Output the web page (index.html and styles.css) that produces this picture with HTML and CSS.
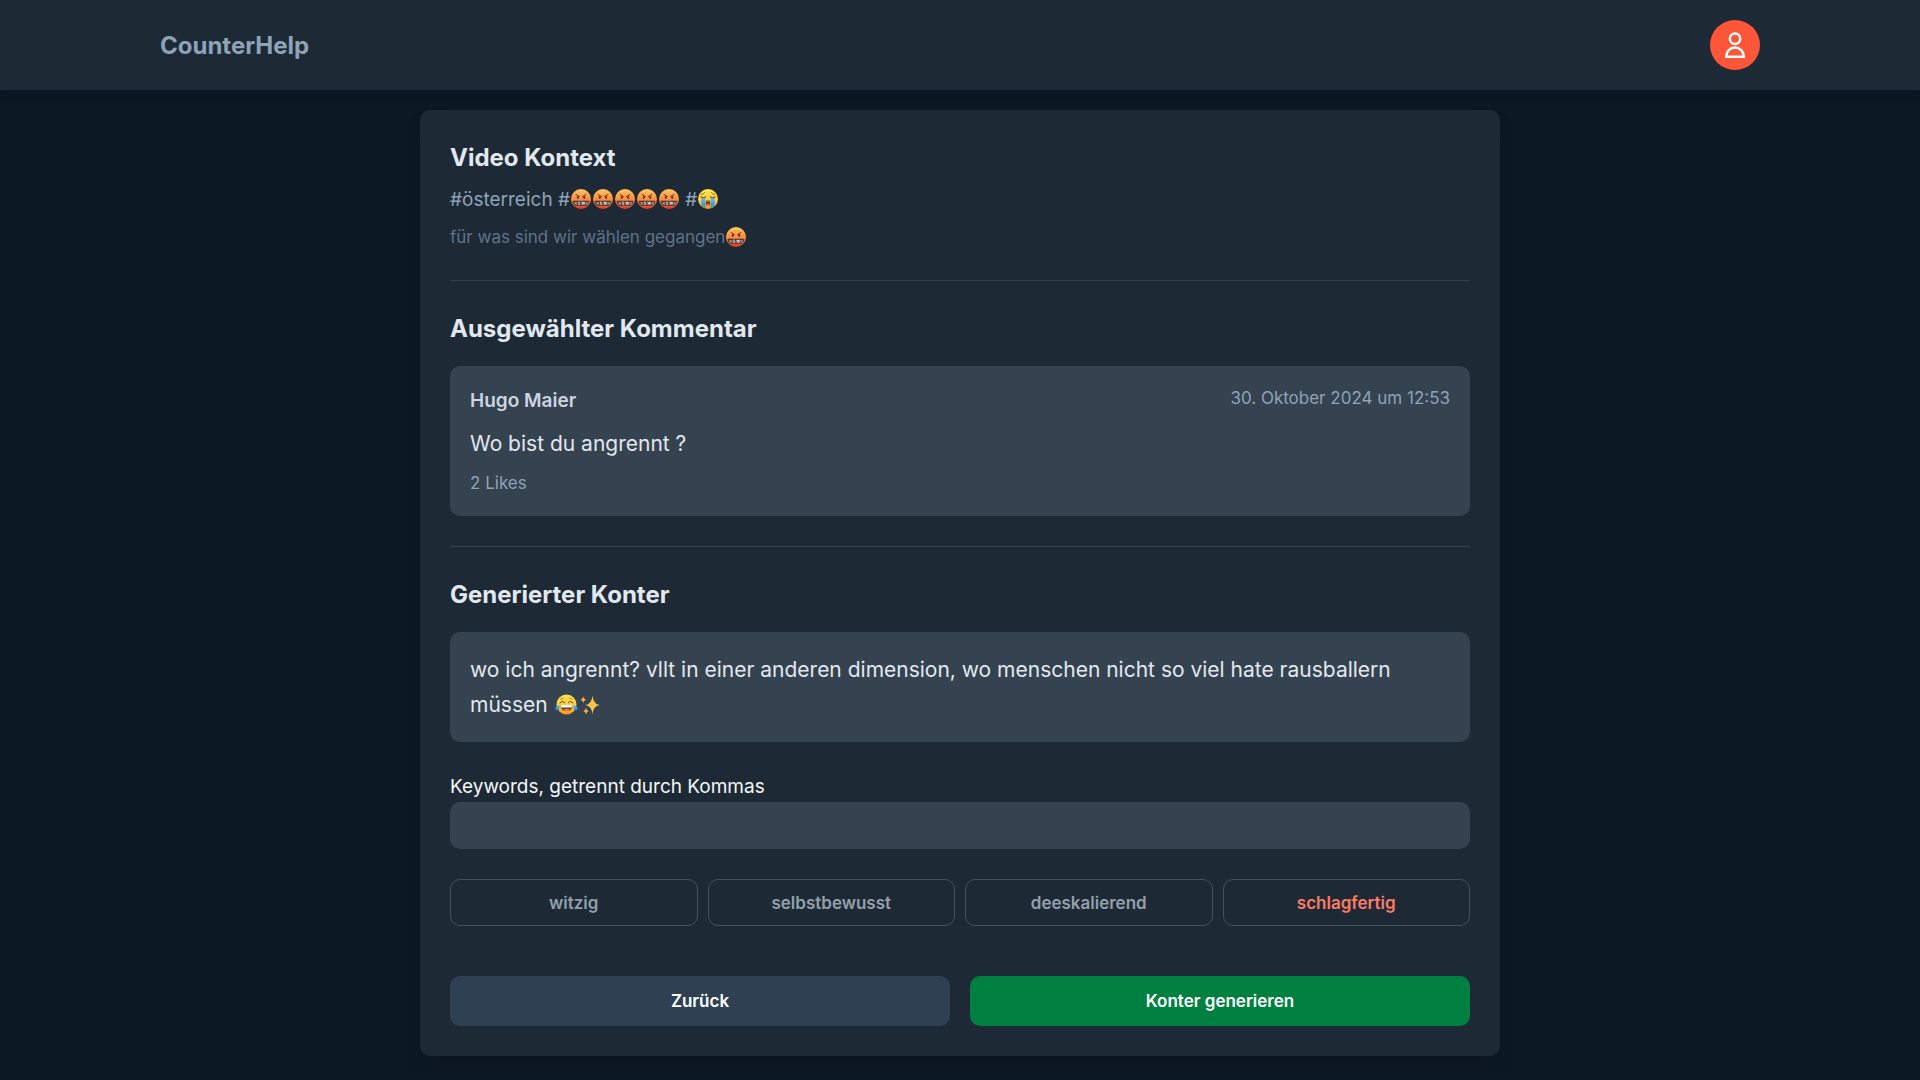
FILE: index.html
```html
<!DOCTYPE html>
<html lang="de">
<head>
  <meta charset="UTF-8">
  <meta name="viewport" content="width=device-width, initial-scale=1.0">
  <title>CounterHelp</title>
  <link rel="stylesheet" href="styles.css">
</head>
<body>
  <!-- Emoji Symbole -->
  <svg class="sprite" aria-hidden="true">
    <defs>
      <linearGradient id="redFace" x1="0" y1="0" x2="0" y2="1">
        <stop offset="0" stop-color="#ffc766"/>
        <stop offset="0.5" stop-color="#ff8f40"/>
        <stop offset="1" stop-color="#e8381c"/>
      </linearGradient>
      <linearGradient id="yellowFace" x1="0" y1="0" x2="0" y2="1">
        <stop offset="0" stop-color="#ffe65a"/>
        <stop offset="0.6" stop-color="#ffc933"/>
        <stop offset="1" stop-color="#f29a1d"/>
      </linearGradient>
      <linearGradient id="tears" x1="0" y1="0" x2="0" y2="1">
        <stop offset="0" stop-color="#5cc3f5"/>
        <stop offset="1" stop-color="#2488dc"/>
      </linearGradient>
      <symbol id="cursing" viewBox="0 0 40 40">
        <circle cx="20" cy="20" r="20" fill="url(#redFace)"/>
        <path d="M10 11l7 4M30 11l-7 4" stroke="#7a2c12" stroke-width="2" stroke-linecap="round"/>
        <ellipse cx="13.500" cy="17" rx="2" ry="2.400" fill="#55200f"/>
        <ellipse cx="26.500" cy="17" rx="2" ry="2.400" fill="#55200f"/>
        <path d="M5 23.500h30q2 0 1.500 2-1 4-3.500 7-1 1-2.500 1h-21q-1.500 0-2.500-1-2.500-3-3.500-7-.500-2 1.500-2z" fill="#473234"/>
        <path d="M7 26l5 5.500M11.500 26.500l-4 4.500M17.500 26h-3v2.500h3v2.500h-3M20.500 25.500v3M20.500 30.500v1M23.500 25.500v6M26 25.500v6M22.500 27.500h5M22.500 29.500h5M33.500 25.500l-4 6M29.500 26v1.500M33 29.500v1.500" fill="none" stroke="#f8f2f2" stroke-width="1.400"/>
      </symbol>
      <symbol id="sobbing" viewBox="0 0 40 40">
        <circle cx="20" cy="20" r="20" fill="url(#yellowFace)"/>
        <path d="M7 11q4-1 6-4M33 11q-4-1-6-4" fill="none" stroke="#8a5a14" stroke-width="1.800" stroke-linecap="round"/>
        <path d="M6.500 18h8v20l-4-1.500-4-4zM25.500 18h8v14.500l-4 4-4 1.500z" fill="url(#tears)"/>
        <path d="M5.500 16q5 3.500 10 0M24.500 16q5 3.500 10 0" fill="none" stroke="#6b4012" stroke-width="2" stroke-linecap="round"/>
        <ellipse cx="20" cy="28" rx="4.500" ry="6" fill="#7a3d18"/>
        <path d="M16.500 31q3.500-3 7 0-1 3-3.500 3t-3.500-3z" fill="#f07058"/>
        <path d="M17 24.500q3-3 6 0z" fill="#fff"/>
      </symbol>
      <symbol id="joy" viewBox="0 0 46 42">
        <circle cx="23" cy="21" r="20" fill="url(#yellowFace)"/>
        <path d="M11 11q3-3 6-3M35 11q-3-3-6-3" fill="none" stroke="#a86f1c" stroke-width="1.600" stroke-linecap="round"/>
        <path d="M10 18q5-6 9.500-.500M36 18q-5-6-9.500-.500" fill="none" stroke="#6b4012" stroke-width="2" stroke-linecap="round"/>
        <path d="M10.500 22h25q-1 12-12.500 12t-12.500-12z" fill="#7a3d18"/>
        <path d="M11 22h24l-1 5h-22z" fill="#fff"/>
        <path d="M16 31.500q7-4 14 0-2.500 2.500-7 2.500t-7-2.500z" fill="#f07058"/>
        <path d="M9 22q1 10-3.500 10.500-4.500.500-5-3.500 0-4 8.500-7zM37 22q-1 10 3.500 10.500 4.500.500 5-3.500 0-4-8.500-7z" fill="url(#tears)"/>
      </symbol>
      <symbol id="sparkles" viewBox="0 0 40 40">
        <path d="M25 1q1.500 17.500 14.500 19-13 1.500-14.500 19-1.500-17.500-14.500-19 13-1.500 14.500-19z" fill="#fbc648"/>
        <path d="M6.500 2q.800 6.500 6 7.500-5.200 1-6 7.500-.800-6.500-6-7.500 5.200-1 6-7.500zM12 25q.800 6 5.500 7-4.700 1-5.500 7-.800-6-5.500-7 4.700-1 5.500-7z" fill="#f5b13c"/>
      </symbol>
    </defs>
  </svg>

  <header class="header">
    <div class="header-inner">
      <a href="#" class="brand">CounterHelp</a>
      <button type="button" class="avatar" aria-label="Profil">
        <svg viewBox="0 0 30 30" fill="none" stroke="#fff" stroke-width="2.500">
          <circle cx="15" cy="8.800" r="5.200"/>
          <path d="M6.200 26.800v-.500a8.800 8.800 0 0 1 17.600 0v.500z"/>
        </svg>
      </button>
    </div>
  </header>

  <main class="card">
    <section class="section">
      <h2>Video Kontext</h2>
      <p class="tags">#österreich #<svg class="emoji" role="img" aria-label="🤬"><use href="#cursing"/></svg><svg class="emoji" role="img" aria-label="🤬"><use href="#cursing"/></svg><svg class="emoji" role="img" aria-label="🤬"><use href="#cursing"/></svg><svg class="emoji" role="img" aria-label="🤬"><use href="#cursing"/></svg><svg class="emoji" role="img" aria-label="🤬"><use href="#cursing"/></svg> #<svg class="emoji" role="img" aria-label="😭"><use href="#sobbing"/></svg></p>
      <p class="description">für was sind wir wählen gegangen<svg class="emoji" role="img" aria-label="🤬"><use href="#cursing"/></svg></p>
    </section>

    <section class="section">
      <h2>Ausgewählter Kommentar</h2>
      <div class="box">
        <div class="comment-head">
          <span class="author">Hugo Maier</span>
          <time class="meta" datetime="2024-10-30T12:53">30. Oktober 2024 um 12:53</time>
        </div>
        <p class="comment-text">Wo bist du angrennt ?</p>
        <p class="meta">2 Likes</p>
      </div>
    </section>

    <section class="section">
      <h2>Generierter Konter</h2>
      <div class="box">
        <p class="counter-text">wo ich angrennt? vllt in einer anderen dimension, wo menschen nicht so viel hate rausballern müssen <svg class="emoji emoji-wide" role="img" aria-label="😂"><use href="#joy"/></svg><svg class="emoji" role="img" aria-label="✨"><use href="#sparkles"/></svg></p>
      </div>

      <form id="counterForm">
        <label for="keywords">Keywords, getrennt durch Kommas</label>
        <input type="text" id="keywords" name="keywords">

        <div class="styles">
          <button type="button" class="chip">witzig</button>
          <button type="button" class="chip">selbstbewusst</button>
          <button type="button" class="chip">deeskalierend</button>
          <button type="button" class="chip active">schlagfertig</button>
        </div>

        <div class="actions">
          <button type="button" class="btn">Zurück</button>
          <button type="submit" class="btn btn-primary">Konter generieren</button>
        </div>
      </form>
    </section>
  </main>
</body>
</html>
```
FILE: styles.css
```css
* {
  box-sizing: border-box;
}
body {
  margin: 0;
  padding-bottom: 20px;
  font-family: Inter, "Liberation Sans", sans-serif;
  font-size: 19px;
  line-height: 30px;
  background-color: #0c1823;
  color: #f5f7fa;
}
h2, p {
  margin: 0;
}
h2 {
  font-size: 24px;
  line-height: 35px;
  font-weight: 700;
  color: #e2e8f0;
}
button, input {
  font-family: inherit;
}
button {
  cursor: pointer;
}
.sprite {
  position: absolute;
  width: 0;
  height: 0;
}

/* Header */
.header {
  background-color: #1d2a35;
  box-shadow: 0 5px 8px rgba(0, 0, 0, 0.1);
}
.header-inner {
  display: flex;
  align-items: center;
  justify-content: space-between;
  max-width: 1640px;
  margin: 0 auto;
  padding: 20px;
}
.brand {
  font-size: 24px;
  line-height: 35px;
  font-weight: 700;
  color: #8fa3b8;
  text-decoration: none;
}
.avatar {
  display: flex;
  align-items: center;
  justify-content: center;
  width: 50px;
  height: 50px;
  padding: 0;
  border: none;
  border-radius: 50%;
  background-color: #ff5539;
}
.avatar svg {
  width: 30px;
  height: 30px;
}

/* Card */
.card {
  max-width: 1080px;
  margin: 20px auto 0;
  padding: 30px;
  border-radius: 10px;
  background-color: #1d2a35;
  box-shadow: 0 12px 18px rgba(0, 0, 0, 0.1);
}
.section + .section {
  margin-top: 30px;
  padding-top: 30px;
  border-top: 1px solid #34414e;
}
.tags {
  margin-top: 10px;
  color: #8fa3b8;
}
.description {
  margin-top: 10px;
  font-size: 17px;
  line-height: 25px;
  color: #5f738a;
}
.emoji {
  width: 20px;
  height: 20px;
  margin: 0 1px;
  vertical-align: -3px;
}
.description .emoji {
  vertical-align: -4px;
}
.emoji-wide {
  width: 23px;
  height: 21px;
}
.box {
  margin-top: 20px;
  padding: 20px;
  border-radius: 10px;
  background-color: #35424f;
}
.comment-head {
  display: flex;
  align-items: flex-start;
  justify-content: space-between;
}
.author {
  font-weight: 600;
  color: #cbd5e1;
}
.meta {
  font-size: 17px;
  line-height: 25px;
  color: #8fa3b8;
}
.comment-text {
  margin: 10px 0;
}
.comment-text, .counter-text {
  font-size: 21px;
  line-height: 35px;
  color: #e2e8f0;
}

/* Formular */
label {
  display: block;
  margin-top: 30px;
}
input {
  display: block;
  width: 100%;
  height: 47px;
  padding: 10px 15px;
  border: none;
  border-radius: 10px;
  background-color: #35424f;
  color: #e2e8f0;
  font-size: 17px;
}
.styles {
  display: grid;
  grid-template-columns: repeat(4, 1fr);
  gap: 10px;
  margin-top: 30px;
}
.chip {
  height: 47px;
  border: 1px solid #44515e;
  border-radius: 10px;
  background-color: transparent;
  color: #949fac;
  font-size: 17px;
  font-weight: 600;
}
.chip.active {
  color: #ff7a66;
}
.actions {
  display: grid;
  grid-template-columns: 1fr 1fr;
  gap: 20px;
  margin-top: 50px;
}
.btn {
  height: 50px;
  border: none;
  border-radius: 10px;
  background-color: #2f4053;
  color: #fff;
  font-size: 17px;
  font-weight: 600;
}
.btn-primary {
  background-color: #008040;
}
```
